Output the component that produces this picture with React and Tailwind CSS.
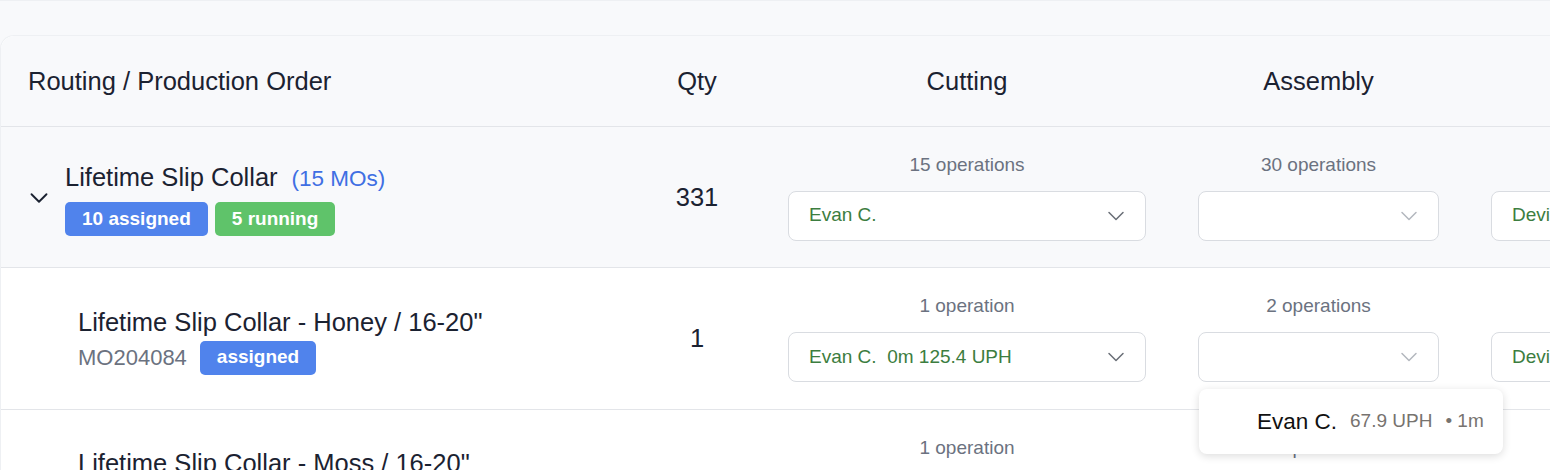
import { ChevronDown } from "lucide-react";

const font = { fontFamily: '"Liberation Sans", Arial, Helvetica, sans-serif' };

function Select({ children, muted = false, width }) {
  return (
    <div
      className={`flex items-center justify-between h-[50px] bg-white border border-[#d9dce1] rounded-[8px] pl-[20px] pr-[22px] ${width}`}
    >
      <span className="text-[19px] text-[#3c7d40] whitespace-nowrap">{children}</span>
      <ChevronDown
        size={28}
        strokeWidth={1.3}
        className={muted ? "text-[#b4b8bf] -mr-[7px]" : "text-[#6b7078] -mr-[7px]"}
      />
    </div>
  );
}

function OpCell({ label, children }) {
  return (
    <div className="flex flex-col items-center gap-[15px] px-[26px]">
      <div className="text-[19px] leading-[22px] text-[#6b7280]">{label}</div>
      {children}
    </div>
  );
}

function Badge({ color, children }) {
  return (
    <span
      className={`inline-flex items-center h-[34px] px-[17px] rounded-[5px] text-white font-bold text-[19px] ${color}`}
    >
      {children}
    </span>
  );
}

export default function App() {
  return (
    <div
      className="w-[1550px] h-[470px] overflow-hidden bg-[#f8f9fb] text-[#1b2231]"
      style={font}
    >
      <div className="h-[35px] border-t border-[#eef0f3]" />
      <div className="bg-white rounded-tl-[14px] border-t border-l border-[#eef0f3]">
        {/* Header */}
        <div className="grid grid-cols-[631px_130px_410px_293px_300px] items-center h-[91px] bg-[#f8f9fb] rounded-tl-[14px] border-b border-[#e3e5e9] text-[25.5px]">
          <div className="pl-[27px]">Routing / Production Order</div>
          <div className="text-center">Qty</div>
          <div className="text-center">Cutting</div>
          <div className="text-center">Assembly</div>
          <div />
        </div>

        {/* Group row */}
        <div className="grid grid-cols-[631px_130px_410px_293px_300px] items-center h-[141px] bg-[#f8f9fb] border-b border-[#e3e5e9]">
          <div className="flex items-center pl-[23px]">
            <ChevronDown size={30} strokeWidth={1.5} className="text-[#1b2231] mt-[2px]" />
            <div className="ml-[11px] flex flex-col gap-[6px] pt-[4px]">
              <div className="flex items-baseline">
                <span className="text-[25.5px] leading-[30px]">Lifetime Slip Collar</span>
                <span className="ml-[14px] text-[22.5px] text-[#3f6fe3]">(15 MOs)</span>
              </div>
              <div className="flex gap-[7px]">
                <Badge color="bg-[#5083ec]">10 assigned</Badge>
                <Badge color="bg-[#5fc36a]">5 running</Badge>
              </div>
            </div>
          </div>
          <div className="text-center text-[25.5px]">331</div>
          <OpCell label="15 operations">
            <Select width="w-full">Evan C.</Select>
          </OpCell>
          <OpCell label="30 operations">
            <Select width="w-full" muted />
          </OpCell>
          <div className="flex flex-col pl-[26px] pt-[37px]">
            <Select width="w-[280px]">Device</Select>
          </div>
        </div>

        {/* MO row */}
        <div className="grid grid-cols-[631px_130px_410px_293px_300px] items-center h-[142px] border-b border-[#e3e5e9]">
          <div className="pl-[77px] flex flex-col gap-[4px] pt-[4px]">
            <div className="text-[25.5px] leading-[30px]">Lifetime Slip Collar - Honey / 16-20"</div>
            <div className="flex items-center gap-[13px]">
              <span className="text-[22px] text-[#6b7280]">MO204084</span>
              <Badge color="bg-[#5083ec]">assigned</Badge>
            </div>
          </div>
          <div className="text-center text-[25.5px]">1</div>
          <OpCell label="1 operation">
            <Select width="w-full">Evan C.&nbsp;&nbsp;0m 125.4 UPH</Select>
          </OpCell>
          <OpCell label="2 operations">
            <div className="relative w-full">
              <Select width="w-full" muted />
              <div className="absolute z-10 left-[1px] top-[57px] w-[304px] h-[65px] bg-white rounded-[8px] shadow-[0_2px_8px_rgba(0,0,0,0.14)] flex items-center pl-[58px] whitespace-nowrap">
                <span className="text-[22.5px] text-[#111111]">Evan C.</span>
                <span className="ml-[13px] text-[19px] text-[#77736f]">67.9 UPH</span>
                <span className="ml-[13px] text-[19px] text-[#77736f]">• 1m</span>
              </div>
            </div>
          </OpCell>
          <div className="flex flex-col pl-[26px] pt-[37px]">
            <Select width="w-[280px]">Device</Select>
          </div>
        </div>

        {/* Next MO row (partially visible) */}
        <div className="grid grid-cols-[631px_130px_410px_293px_300px] items-start h-[141px] pt-[27px]">
          <div className="pl-[77px] pt-[11px]">
            <div className="text-[25.5px] leading-[30px]">Lifetime Slip Collar - Moss / 16-20"</div>
          </div>
          <div />
          <OpCell label="1 operation">
            <Select width="w-full">Evan C.</Select>
          </OpCell>
          <OpCell label="2 operations">
            <Select width="w-full" muted />
          </OpCell>
          <div />
        </div>
      </div>
    </div>
  );
}
